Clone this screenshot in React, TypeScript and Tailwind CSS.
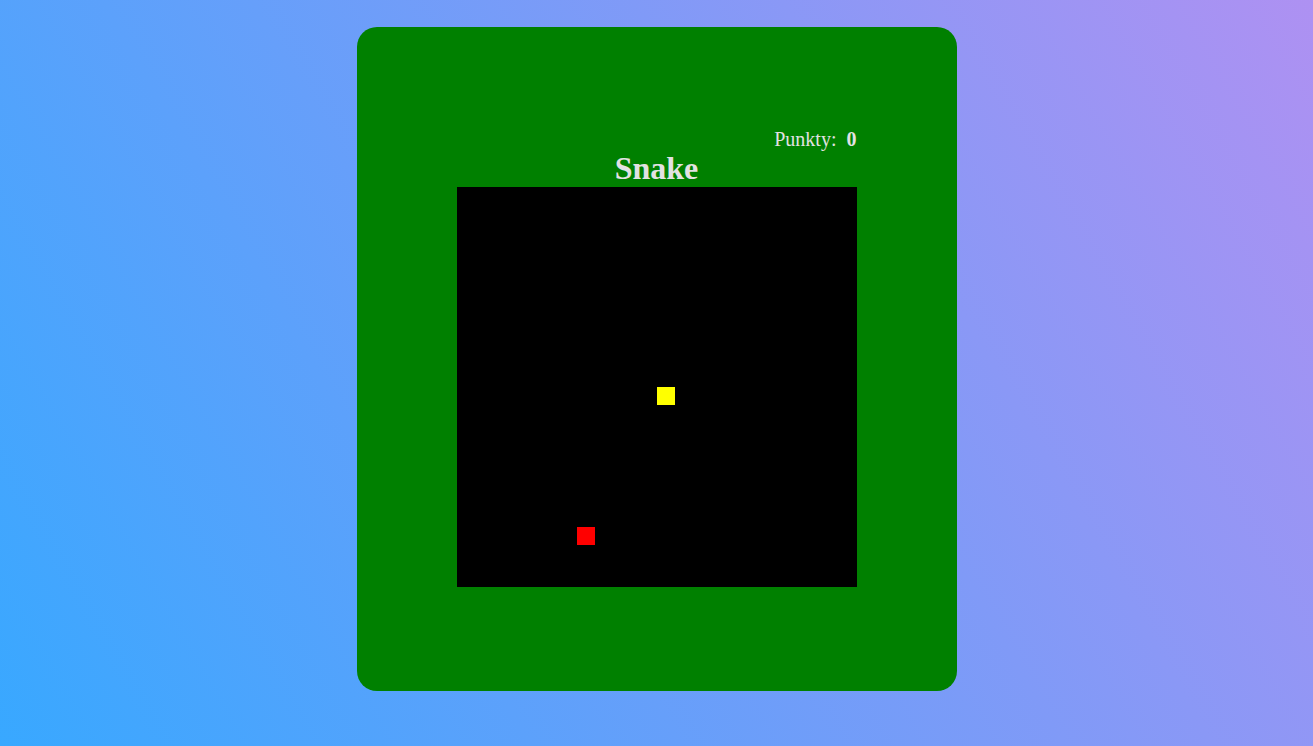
const CELL = 20;

const snake = [{ x: 10, y: 10 }];
const food = { x: 6, y: 17 };

const Block = ({ x, y, color }: { x: number; y: number; color: string }) => (
  <div
    className={`absolute h-[18px] w-[18px] ${color}`}
    style={{ left: x * CELL, top: y * CELL }}
  />
);

const App = () => {
  const score = 0;
  return (
    <div className="h-[746px] w-full overflow-hidden bg-[linear-gradient(60deg,#38a8ff,#ae91f2)] font-['Liberation_Serif',serif]">
      <div className="mx-auto mt-[27px] flex h-[664px] w-[600px] flex-col items-center rounded-[20px] bg-[#008000] pt-[101px] text-[#e2e2e2]">
        <div className="w-[400px] text-right text-[20px] leading-[22px]">
          Punkty:&nbsp; <span className="font-bold">{score}</span>
        </div>
        <h1 className="text-[32px] font-bold leading-[37px]">Snake</h1>
        <div className="relative h-[400px] w-[400px] bg-black">
          {snake.map((s, i) => (
            <Block key={i} x={s.x} y={s.y} color="bg-[#ffff00]" />
          ))}
          <Block x={food.x} y={food.y} color="bg-[#ff0000]" />
        </div>
      </div>
    </div>
  );
};

export default App;
